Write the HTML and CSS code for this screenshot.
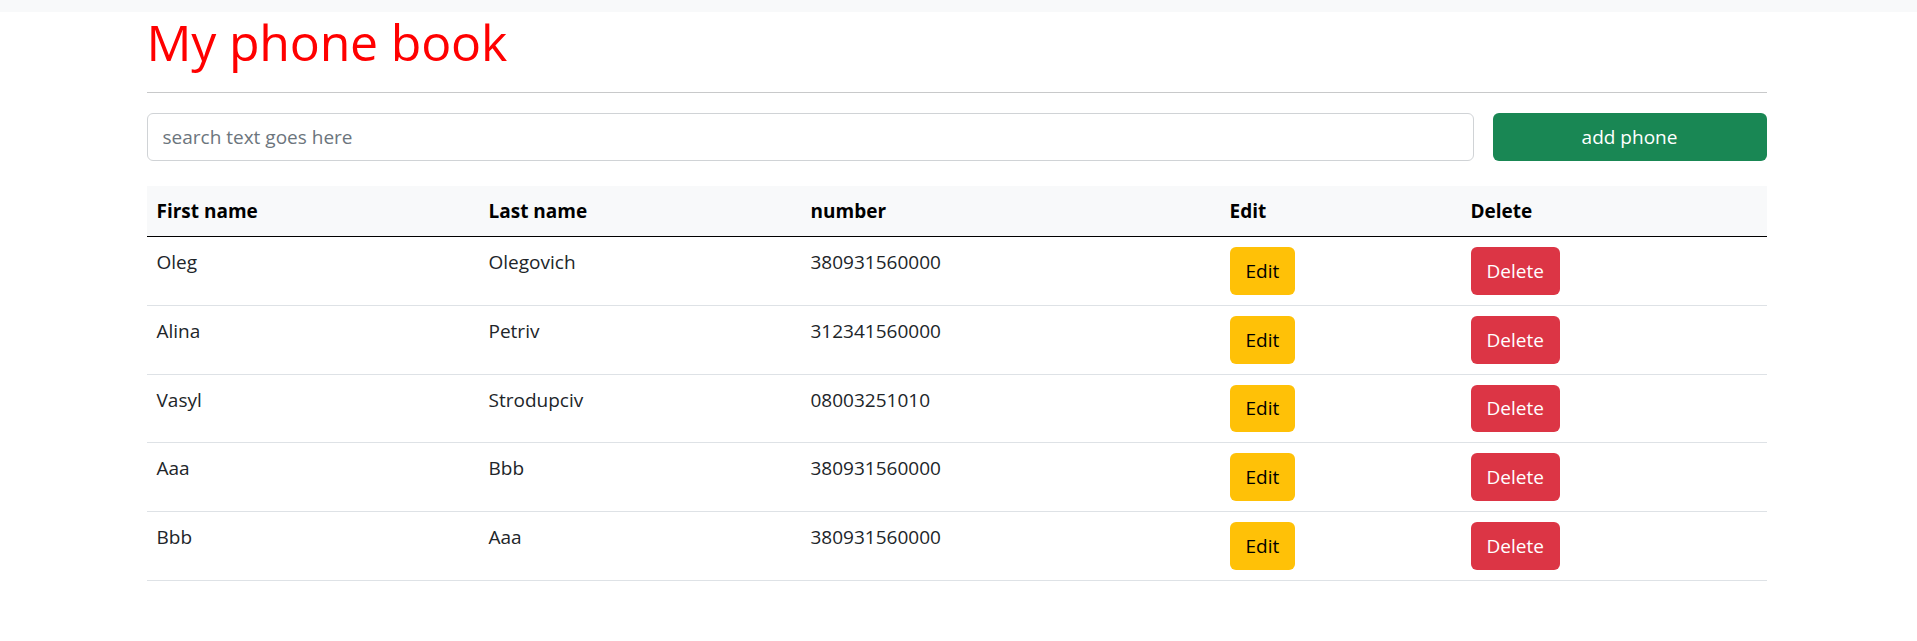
FILE: index.html
```html
<!DOCTYPE html>
<html lang="en">
<head>
<meta charset="utf-8">
<title>My phone book</title>
<link rel="stylesheet" href="styles.css">
</head>
<body>
<nav class="topbar"></nav>
<main class="container">
  <h1 class="title">My phone book</h1>
  <hr class="divider">
  <div class="search-row">
    <input class="search-input" type="text" placeholder="search text goes here">
    <button class="btn btn-add">add phone</button>
  </div>
  <table class="phones">
    <thead>
      <tr>
        <th class="c-first">First name</th>
        <th class="c-last">Last name</th>
        <th class="c-num">number</th>
        <th class="c-edit">Edit</th>
        <th class="c-del">Delete</th>
      </tr>
    </thead>
    <tbody>
      <tr><td>Oleg</td><td>Olegovich</td><td>380931560000</td><td><button class="btn btn-edit">Edit</button></td><td><button class="btn btn-del">Delete</button></td></tr>
      <tr><td>Alina</td><td>Petriv</td><td>312341560000</td><td><button class="btn btn-edit">Edit</button></td><td><button class="btn btn-del">Delete</button></td></tr>
      <tr><td>Vasyl</td><td>Strodupciv</td><td>08003251010</td><td><button class="btn btn-edit">Edit</button></td><td><button class="btn btn-del">Delete</button></td></tr>
      <tr><td>Aaa</td><td>Bbb</td><td>380931560000</td><td><button class="btn btn-edit">Edit</button></td><td><button class="btn btn-del">Delete</button></td></tr>
      <tr><td>Bbb</td><td>Aaa</td><td>380931560000</td><td><button class="btn btn-edit">Edit</button></td><td><button class="btn btn-del">Delete</button></td></tr>
    </tbody>
  </table>
</main>
</body>
</html>
```

FILE: styles.css
```css
* { box-sizing: border-box; }
html, body { margin: 0; padding: 0; }
body {
  font-family: "Open Sans", "Noto Sans", sans-serif;
  font-size: 19px;
  line-height: 30px;
  color: #212529;
  background: #fff;
}
.topbar {
  height: 12px;
  background: #f8f9fa;
}
.container {
  width: 1620px;
  margin: 0 auto;
  padding: 0;
  position: relative;
  left: -2px;
}
.title {
  margin: 0;
  font-size: 50px;
  line-height: 60px;
  font-weight: 400;
  letter-spacing: -0.2px;
  color: #ff0000;
}
.divider {
  margin: 20px 0;
  border: 0;
  border-top: 1px solid #c8c9ca;
  height: 0;
}
.search-row {
  display: flex;
  gap: 19px;
  margin-bottom: 25px;
}
.search-input {
  flex: 1;
  height: 48px;
  padding: 7px 15px;
  font-family: inherit;
  font-size: 19px;
  color: #212529;
  border: 1px solid #d0d3d6;
  border-radius: 6px;
  outline: none;
}
.search-input::placeholder { color: #6c757d; }
.btn {
  font-family: inherit;
  font-size: 19px;
  line-height: 30px;
  border: 1px solid transparent;
  border-radius: 6px;
  padding: 7px 15px;
  height: 47.75px;
  cursor: pointer;
}
.btn-add {
  width: 274px;
  height: 48px;
  background: #198754;
  color: #fff;
}
.btn-edit {
  background: #ffc107;
  color: #000;
}
.btn-del {
  background: #dc3545;
  color: #fff;
}
.phones {
  width: 100%;
  border-collapse: collapse;
  table-layout: fixed;
}
.phones th, .phones td {
  padding: 10px;
  text-align: left;
  vertical-align: top;
}
.phones thead tr {
  background: #f8f9fa;
  border-bottom: 1px solid #000;
}
.phones th { font-weight: 700; color: #000; }
.phones tbody tr { border-bottom: 1px solid #dee2e6; }
.c-first { width: 332px; }
.c-last { width: 322px; }
.c-num { width: 419px; }
.c-edit { width: 241px; }
```
